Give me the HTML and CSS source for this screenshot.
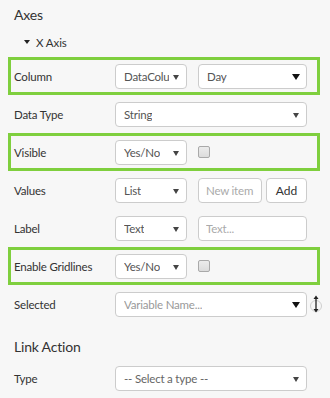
FILE: index.html
```html
<!DOCTYPE html>
<html lang="en">
  <head>
    <meta name="viewport" content="width=device-width, initial-scale=1.0" />
    <title>Chart Properties</title>
    <link rel="stylesheet" href="styles.css">
  </head>

  <body>
    <div class="panel">
      <h3 class="section-title">Axes</h3>
      <div class="axis-toggle"><span class="caret-down"></span>X Axis</div>

      <div class="row highlight">
        <label>Column</label>
        <div class="controls">
          <div class="select small"><span class="value">DataColumn</span></div>
          <div class="select wide dark"><span class="value">Day</span></div>
        </div>
      </div>

      <div class="row">
        <label>Data Type</label>
        <div class="controls">
          <div class="select full"><span class="value">String</span></div>
        </div>
      </div>

      <div class="row highlight">
        <label>Visible</label>
        <div class="controls">
          <div class="select small"><span class="value">Yes/No</span></div>
          <input type="checkbox" class="check" />
        </div>
      </div>

      <div class="row">
        <label>Values</label>
        <div class="controls">
          <div class="select small"><span class="value">List</span></div>
          <input type="text" class="text-input item" placeholder="New item" />
          <button class="btn">Add</button>
        </div>
      </div>

      <div class="row">
        <label>Label</label>
        <div class="controls">
          <div class="select small"><span class="value">Text</span></div>
          <input type="text" class="text-input wide" placeholder="Text..." />
        </div>
      </div>

      <div class="row highlight">
        <label>Enable Gridlines</label>
        <div class="controls">
          <div class="select small"><span class="value">Yes/No</span></div>
          <input type="checkbox" class="check" />
        </div>
      </div>

      <div class="row">
        <label>Selected</label>
        <div class="controls">
          <div class="select full dark"><span class="value placeholder">Variable Name...</span></div>
          <span class="sort-icon">
            <svg width="14" height="20" viewBox="0 0 14 20">
              <circle cx="7" cy="12" r="5.5" fill="none" stroke="#cfcfcf" stroke-width="1" />
              <line x1="7" y1="3" x2="7" y2="17" stroke="#222" stroke-width="1.3" />
              <polygon points="4.5,5 7,1.5 9.5,5" fill="#222" />
              <polygon points="4.5,15 7,18.5 9.5,15" fill="#222" />
            </svg>
          </span>
        </div>
      </div>

      <h3 class="section-title link">Link Action</h3>

      <div class="row">
        <label>Type</label>
        <div class="controls">
          <div class="select full"><span class="value muted">-- Select a type --</span></div>
        </div>
      </div>
    </div>
  </body>
</html>
```

FILE: styles.css
```css
* {
  padding: 0;
  margin: 0;
  box-sizing: border-box;
  font-family: "Lato", "Open Sans", sans-serif;
}

body {
  background-color: #f7f7f7;
  color: #333;
}

.panel {
  width: 312px;
  margin-left: 8px;
  padding-top: 5px;
}

.section-title {
  font-size: 14px;
  font-weight: normal;
  line-height: 20px;
  height: 20px;
  padding-left: 6px;
  color: #333;
  letter-spacing: -0.2px;
}

.section-title.link {
  margin-top: 12px;
  height: 24px;
  line-height: 24px;
}

.axis-toggle {
  display: flex;
  align-items: center;
  height: 24px;
  margin-top: 5px;
  margin-bottom: 3px;
  padding-left: 16px;
  font-size: 11.5px;
  letter-spacing: -0.1px;
}

.caret-down {
  width: 0;
  height: 0;
  border-left: 3.5px solid transparent;
  border-right: 3.5px solid transparent;
  border-top: 4px solid #222;
  margin-right: 6px;
}

.row {
  display: flex;
  align-items: center;
  height: 38px;
  padding-left: 6px;
}

.row.highlight {
  box-shadow: inset 0 0 0 3px #7fcf3e;
}

.row label {
  width: 101px;
  font-size: 11.5px;
  letter-spacing: -0.2px;
  color: #333;
}

.controls {
  display: flex;
  align-items: center;
  width: 192px;
  gap: 11px;
}

.select {
  position: relative;
  height: 25px;
  background: #fff;
  border: 1px solid #ccc;
  border-radius: 4px;
  display: flex;
  align-items: center;
  padding: 0 17px 0 8px;
  font-size: 11.5px;
  letter-spacing: -0.2px;
  color: #555;
  flex-shrink: 0;
}

.select .value {
  overflow: hidden;
  white-space: nowrap;
}

.select .placeholder {
  color: #999;
}

.select .muted {
  color: #666;
}

.select::after {
  content: "";
  position: absolute;
  right: 7px;
  top: 10px;
  border-left: 3.5px solid transparent;
  border-right: 3.5px solid transparent;
  border-top: 5px solid #444;
}

.select.dark::after {
  border-left-width: 4px;
  border-right-width: 4px;
  border-top: 6px solid #111;
  right: 6px;
  top: 9px;
}

.select.small {
  width: 72px;
}

.select.wide {
  width: 109px;
}

.select.full {
  width: 192px;
}

.text-input {
  height: 25px;
  border: 1px solid #ccc;
  border-radius: 4px;
  background: #fff;
  padding: 0 7px;
  font-size: 11.5px;
  letter-spacing: -0.2px;
  color: #555;
  outline: none;
}

.text-input::placeholder {
  color: #aaa;
}

.text-input.item {
  width: 64px;
}

.text-input.wide {
  width: 109px;
}

.btn {
  width: 41px;
  height: 25px;
  margin-left: -7px;
  border: 1px solid #ccc;
  border-radius: 4px;
  background: #fff;
  font-size: 12px;
  color: #333;
}

.check {
  appearance: none;
  -webkit-appearance: none;
  width: 12px;
  height: 12px;
  border: 1px solid #a9a9a9;
  border-radius: 2px;
  background: linear-gradient(#ececec, #dcdcdc);
}

.sort-icon {
  display: flex;
  margin-left: -9px;
}
```
